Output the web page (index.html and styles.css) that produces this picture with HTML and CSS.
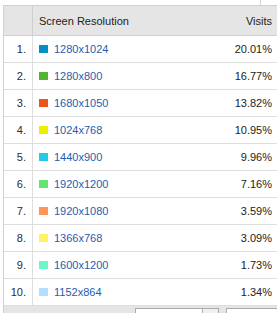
FILE: index.html
```html
<!DOCTYPE html>
<html>
<head>
<meta charset="utf-8">
<link rel="stylesheet" href="styles.css">
</head>
<body>
<div class="page">
  <div class="topline"><span class="tick"></span></div>
  <div class="table">
    <div class="row head">
      <div class="num"></div>
      <div class="res">Screen Resolution</div>
      <div class="visits">Visits</div>
    </div>
    <div class="row"><div class="num">1.</div><div class="res"><span class="sw c1"></span><a>1280x1024</a></div><div class="visits">20.01%</div></div>
    <div class="row"><div class="num">2.</div><div class="res"><span class="sw c2"></span><a>1280x800</a></div><div class="visits">16.77%</div></div>
    <div class="row"><div class="num">3.</div><div class="res"><span class="sw c3"></span><a>1680x1050</a></div><div class="visits">13.82%</div></div>
    <div class="row"><div class="num">4.</div><div class="res"><span class="sw c4"></span><a>1024x768</a></div><div class="visits">10.95%</div></div>
    <div class="row"><div class="num">5.</div><div class="res"><span class="sw c5"></span><a>1440x900</a></div><div class="visits">9.96%</div></div>
    <div class="row"><div class="num">6.</div><div class="res"><span class="sw c6"></span><a>1920x1200</a></div><div class="visits">7.16%</div></div>
    <div class="row"><div class="num">7.</div><div class="res"><span class="sw c7"></span><a>1920x1080</a></div><div class="visits">3.59%</div></div>
    <div class="row"><div class="num">8.</div><div class="res"><span class="sw c8"></span><a>1366x768</a></div><div class="visits">3.09%</div></div>
    <div class="row"><div class="num">9.</div><div class="res"><span class="sw c9"></span><a>1600x1200</a></div><div class="visits">1.73%</div></div>
    <div class="row"><div class="num">10.</div><div class="res"><span class="sw c10"></span><a>1152x864</a></div><div class="visits">1.34%</div></div>
    <div class="footer">
      <div class="select"><span class="btn"></span></div>
      <div class="box"></div>
    </div>
  </div>
</div>
</body>
</html>
```
FILE: styles.css
```css
html, body {
  margin: 0;
  padding: 0;
  background: #fff;
  overflow: hidden;
}
body {
  width: 277px;
  height: 313px;
  font-family: "Liberation Sans", Arial, sans-serif;
  font-size: 11px;
  color: #222;
}
.page {
  width: 277px;
}
.topline {
  height: 5px;
  position: relative;
}
.tick {
  position: absolute;
  left: 260px;
  top: 0;
  width: 1px;
  height: 5px;
  background: #d4d4d4;
}
.table {
  margin-left: 3px;
  border-left: 1px solid #cfcfcf;
  border-top: 1px solid #cfcfcf;
}
.row {
  display: grid;
  grid-template-columns: 29px 1fr auto;
  height: 26px;
  border-bottom: 1px solid #dedede;
}
.row > div {
  display: flex;
  align-items: center;
}
.head {
  height: 29px;
  background: #e5e5e5;
  border-bottom: 1px solid #cfcfcf;
}
.num {
  box-sizing: border-box;
  border-right: 1px solid #dedede;
  justify-content: flex-end;
  padding-right: 6px;
  color: #2a2a3a;
}
.head .num {
  border-right-color: #cfcfcf;
}
.res {
  padding-left: 6px;
}
.visits {
  justify-content: flex-end;
  padding-right: 5px;
}
.res a {
  color: #1d5db0;
  text-decoration: none;
}
.sw {
  width: 9px;
  height: 8px;
  margin-right: 6px;
  flex: none;
}
.c1 { background: #058dc7; }
.c2 { background: #50b432; }
.c3 { background: #ed561b; }
.c4 { background: #edef00; }
.c5 { background: #24cbe5; }
.c6 { background: #64e572; }
.c7 { background: #ff9655; }
.c8 { background: #fff263; }
.c9 { background: #6af9c4; }
.c10 { background: #b2deff; }
.footer {
  height: 12px;
  background: #e5e5e5;
  display: flex;
  align-items: flex-start;
  padding-top: 2px;
  padding-left: 131px;
  gap: 7px;
}
.select {
  width: 84px;
  height: 14px;
  box-sizing: border-box;
  background: #fff;
  border: 1px solid #aaa;
  display: flex;
  justify-content: flex-end;
}
.btn {
  width: 16px;
  height: 14px;
  box-sizing: border-box;
  border-left: 1px solid #aaa;
  background: #f0f0f0;
}
.box {
  flex: 1;
  height: 14px;
  box-sizing: border-box;
  background: #fff;
  border: 1px solid #aaa;
  border-right: none;
}
```
